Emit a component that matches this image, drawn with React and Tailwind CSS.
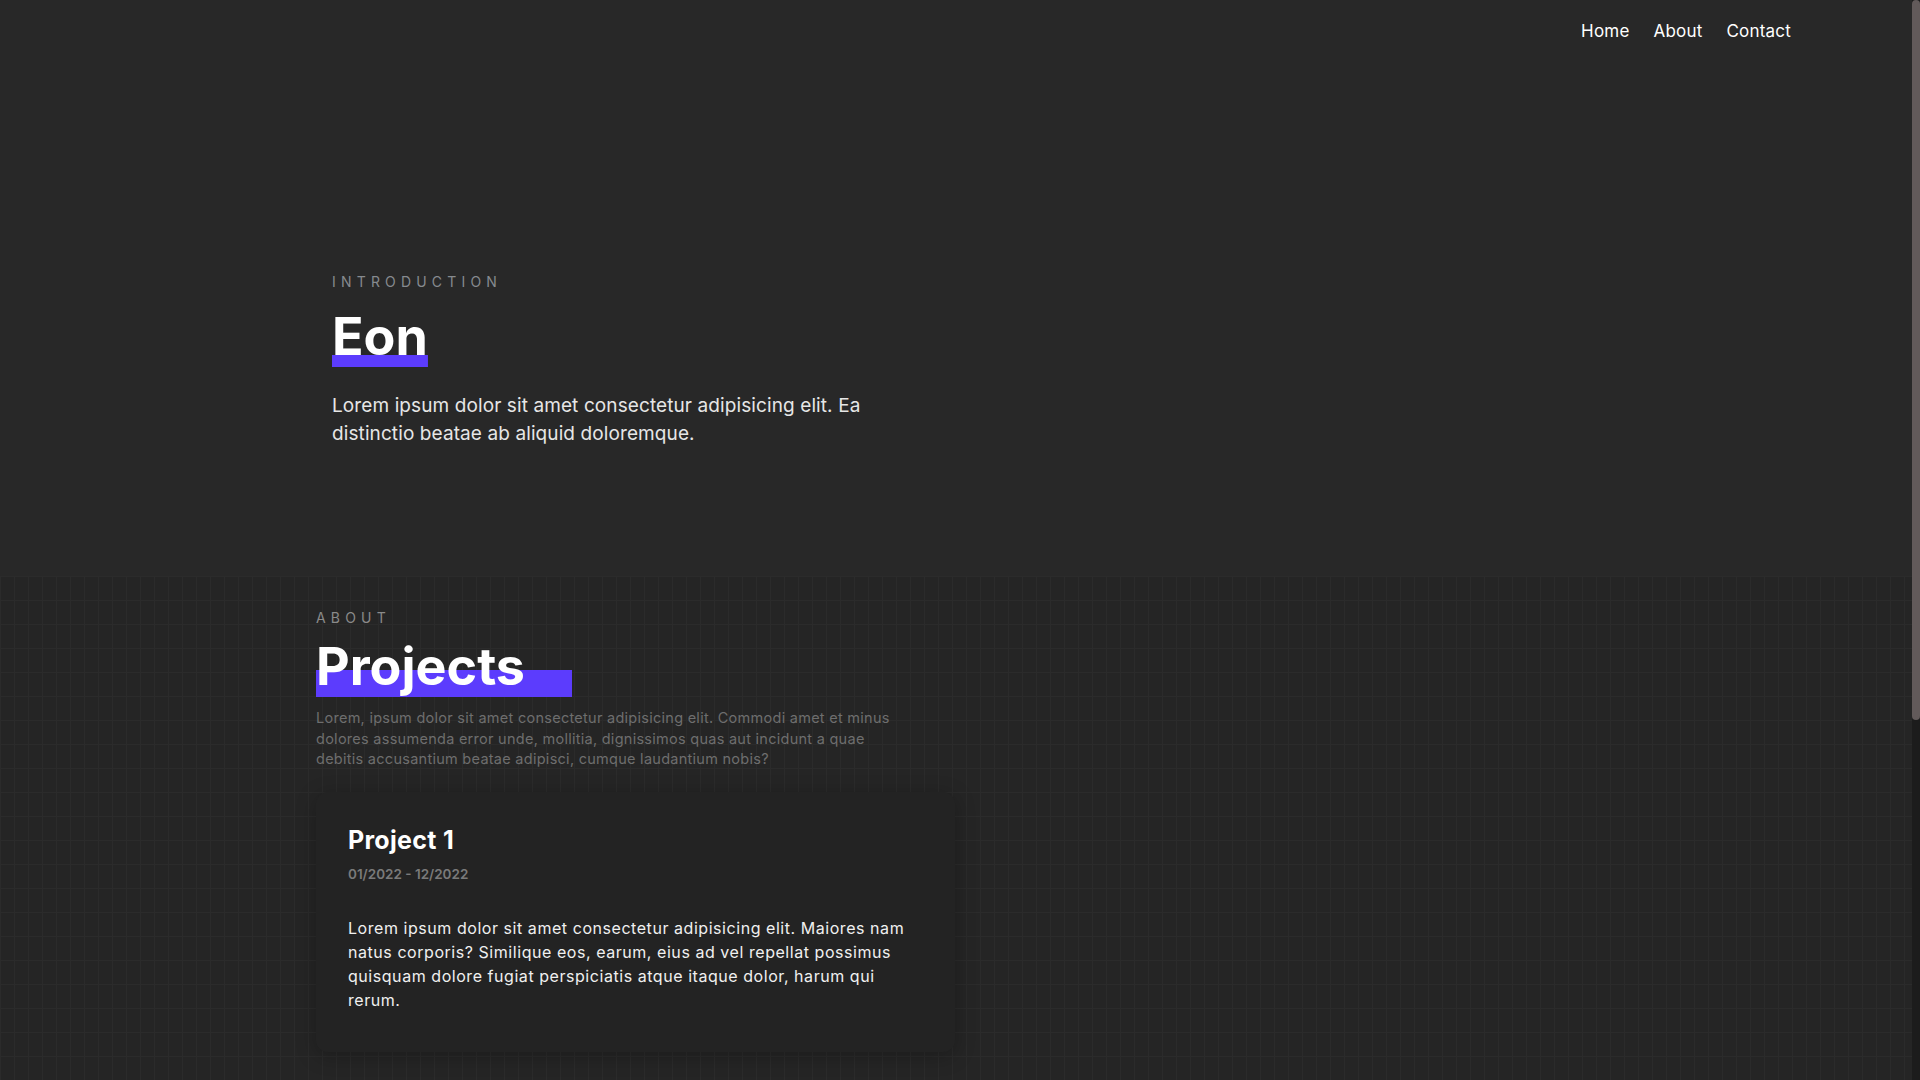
export default function App() {
  const label = 'text-[14px] leading-5 tracking-[0.37em] uppercase'

  return (
    <div className="flex h-screen bg-[#282828] font-['Inter',sans-serif] text-white">
      <main className="flex-1 overflow-y-auto">

        {/* Header + intro */}
        <div className="h-[576px]">
          <nav className="h-[64px] flex items-center justify-end gap-[24px] pr-[121px] text-[17px] tracking-[0.2px] text-white">
            <a href="#">Home</a>
            <a href="#">About</a>
            <a href="#">Contact</a>
          </nav>

          <section className="pl-[332px] pt-[208px]">
            <p className={label + ' text-[#868a8f]'}>Introduction</p>
            <h1 className="mt-[19px] text-[52px] leading-[52px] font-bold">
              <span className="inline-block pb-[4px] bg-[linear-gradient(#5c3cfd,#5c3cfd)] bg-no-repeat bg-bottom bg-[size:100%_12px]">Eon</span>
            </h1>
            <p className="mt-[25px] max-w-[560px] text-[19px] leading-7 tracking-[0.1px] text-[#e6e6e6]">
              Lorem ipsum dolor sit amet consectetur adipisicing elit. Ea distinctio beatae ab aliquid doloremque.
            </p>
          </section>
        </div>

        {/* Projects */}
        <section className="pl-[316px] pt-[32px] pb-[568px] bg-[#252525] bg-[linear-gradient(to_right,#2b2b2b_1px,transparent_1px),linear-gradient(to_bottom,#2b2b2b_1px,transparent_1px)] bg-[size:14px_24px]">
          <p className={label + ' text-[#8a8a8a]'}>About</p>
          <h2 className="mt-[13px] text-[52px] leading-[52px] font-bold">
            <span className="inline-block pb-[4px] pr-[47px] bg-[linear-gradient(#5c3cfd,#5c3cfd)] bg-no-repeat bg-bottom bg-[size:100%_27px]">Projects</span>
          </h2>
          <p className="mt-[11px] max-w-[585px] text-[14.5px] leading-[20.5px] tracking-[0.27px] text-[#6e6e6e]">
            Lorem, ipsum dolor sit amet consectetur adipisicing elit. Commodi amet et minus dolores assumenda error unde, mollitia, dignissimos quas aut incidunt a quae debitis accusantium beatae adipisci, cumque laudantium nobis?
          </p>

          <div className="mt-[22px] w-[639px] rounded-xl bg-[#232323] px-8 pt-8 pb-10 shadow-[0_4px_20px_rgba(0,0,0,0.25)]">
            <h3 className="text-[25px] leading-8 font-bold tracking-[0.3px]">Project 1</h3>
            <p className="mt-2 text-[13.5px] leading-5 font-semibold text-[#7a7a7a]">01/2022 - 12/2022</p>
            <p className="mt-8 text-[16px] leading-6 tracking-[0.55px] text-[#f0f0f0]">
              Lorem ipsum dolor sit amet consectetur adipisicing elit. Maiores nam natus corporis? Similique eos, earum, eius ad vel repellat possimus quisquam dolore fugiat perspiciatis atque itaque dolor, harum qui rerum.
            </p>
          </div>
        </section>
      </main>

      {/* window scrollbar */}
      <div className="w-2 shrink-0 bg-[#1c1c1c]">
        <div className="h-[720px] rounded-full bg-[#625a5a]" />
      </div>
    </div>
  )
}
